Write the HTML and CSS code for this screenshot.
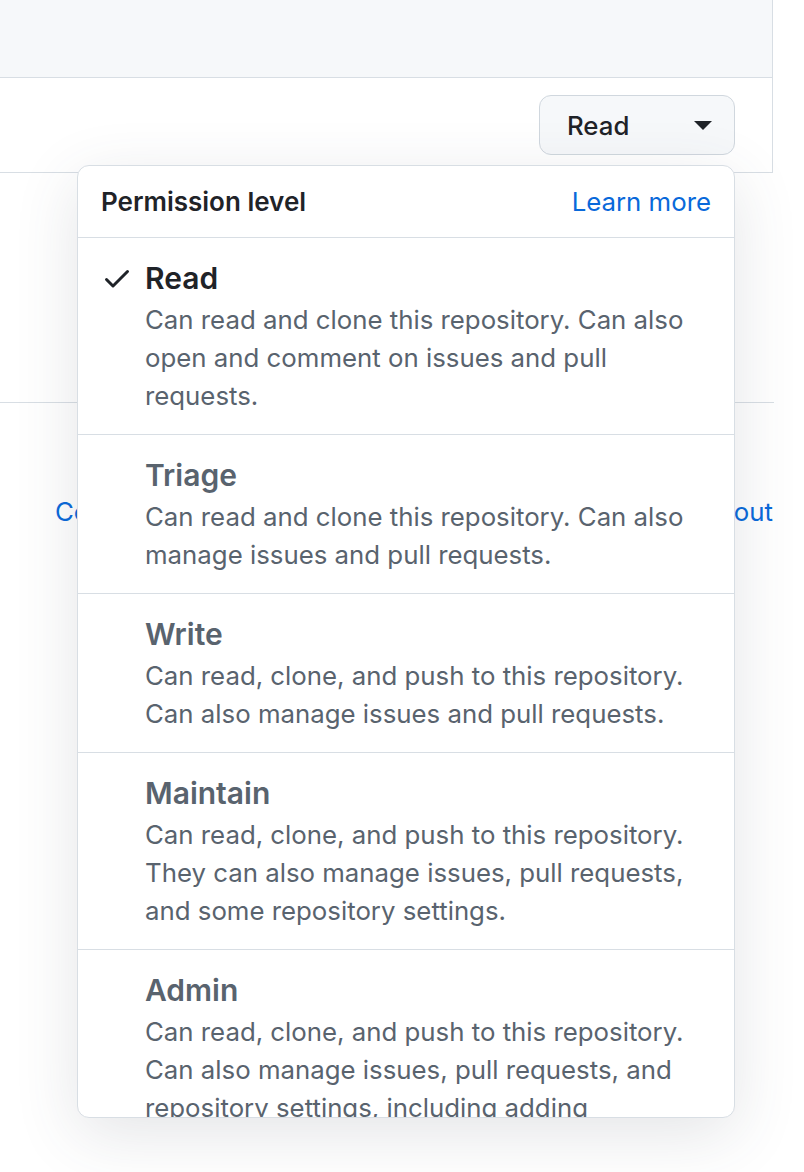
FILE: index.html
```html
<!DOCTYPE html>
<html lang="en">
<head>
<meta charset="utf-8">
<title>Permission level</title>
<link rel="stylesheet" href="styles.css">
</head>
<body>
<div class="page">
  <div class="box">
    <div class="box-head"></div>
    <div class="box-row">
      <div class="menu-wrap">
        <button class="btn" type="button"><span>Read</span><span class="caret"></span></button>
        <div class="menu">
          <div class="menu-head">
            <span class="menu-title">Permission level</span>
            <a class="link" href="#">Learn more</a>
          </div>
          <div class="item selected">
            <svg class="check" viewBox="0 0 16 16" width="32" height="32"><path d="M13.78 4.22a.75.75 0 0 1 0 1.06l-7.25 7.25a.75.75 0 0 1-1.06 0L2.22 9.28a.751.751 0 0 1 .018-1.042.751.751 0 0 1 1.042-.018L6 10.94l6.72-6.72a.75.75 0 0 1 1.06 0Z"/></svg>
            <div class="item-body">
              <div class="item-title">Read</div>
              <div class="item-desc">Can read and clone this repository. Can also open and comment on issues and pull requests.</div>
            </div>
          </div>
          <div class="item">
            <span class="check-space"></span>
            <div class="item-body">
              <div class="item-title">Triage</div>
              <div class="item-desc">Can read and clone this repository. Can also manage issues and pull requests.</div>
            </div>
          </div>
          <div class="item">
            <span class="check-space"></span>
            <div class="item-body">
              <div class="item-title">Write</div>
              <div class="item-desc">Can read, clone, and push to this repository. Can also manage issues and pull requests.</div>
            </div>
          </div>
          <div class="item">
            <span class="check-space"></span>
            <div class="item-body">
              <div class="item-title">Maintain</div>
              <div class="item-desc">Can read, clone, and push to this repository. They can also manage issues, pull requests, and some repository settings.</div>
            </div>
          </div>
          <div class="item">
            <span class="check-space"></span>
            <div class="item-body">
              <div class="item-title">Admin</div>
              <div class="item-desc">Can read, clone, and push to this repository. Can also manage issues, pull requests, and repository settings, including adding collaborators.</div>
            </div>
          </div>
        </div>
      </div>
    </div>
  </div>
  <div class="divider"></div>
  <div class="links">
    <a class="link" href="#">Compare roles</a>
    <a class="link" href="#">Learn about</a>
  </div>
</div>
</body>
</html>
```
FILE: styles.css
```css
* { box-sizing: border-box; }
html, body { margin: 0; padding: 0; background: #ffffff; }
body {
  font-family: Inter, "Liberation Sans", Arial, sans-serif;
  color: #1f2328;
  font-size: 25.8px;
  overflow: hidden;
  height: 1172px;
}
.page { position: relative; width: 804px; }
.box {
  width: 773px;
  border-right: 1px solid #d8dee4;
  border-bottom: 1px solid #d8dee4;
}
.box-head {
  height: 78px;
  background: #f6f8fa;
  border-bottom: 1px solid #d8dee4;
}
.box-row {
  height: 94px;
  display: flex;
  justify-content: flex-end;
  align-items: center;
  padding-right: 37px;
}
.menu-wrap { position: relative; }
.btn {
  display: flex;
  align-items: center;
  justify-content: space-between;
  width: 196px;
  height: 60px;
  padding: 0 22px 0 27px;
  background: #f6f8fa;
  border: 1px solid #d0d7de;
  border-radius: 12px;
  font-family: inherit;
  font-size: 25.8px;
  font-weight: 500;
  color: #1f2328;
}
.caret {
  width: 0; height: 0;
  border-top: 9px solid #1f2328;
  border-left: 9px solid transparent;
  border-right: 9px solid transparent;
}
.menu {
  position: absolute;
  top: 70px;
  right: 0;
  width: 658px;
  height: 953px;
  overflow: hidden;
  background: #ffffff;
  border: 1px solid #d8dee4;
  border-radius: 12px;
  box-shadow: 0 16px 64px rgba(66, 74, 83, 0.14);
  z-index: 2;
}
.menu-head {
  display: flex;
  justify-content: space-between;
  align-items: center;
  height: 72px;
  padding: 0 23px;
  border-bottom: 1px solid #d8dee4;
}
.menu-title { font-weight: 600; font-size: 26px; }
.link { color: #0969da; text-decoration: none; font-size: 25.8px; }
.item {
  display: flex;
  gap: 12px;
  padding: 20px 24px 19px 23px;
  border-bottom: 1px solid #d8dee4;
}
.check { flex: none; fill: #1f2328; margin-top: 4px; }
.check-space { flex: none; width: 32px; }
.item-body { flex: 1; }
.item-title {
  font-size: 30px;
  font-weight: 600;
  line-height: 40px;
  color: #59636e;
}
.selected .item-title { color: #1f2328; }
.item-desc {
  margin-top: 3px;
  line-height: 38px;
  color: #59636e;
}
.divider {
  width: 774px;
  margin-top: 229px;
  border-top: 1px solid #d8dee4;
}
.links {
  display: flex;
  justify-content: space-between;
  width: 773px;
  margin-top: 91px;
  padding-left: 55px;
  line-height: 36px;
}
```
